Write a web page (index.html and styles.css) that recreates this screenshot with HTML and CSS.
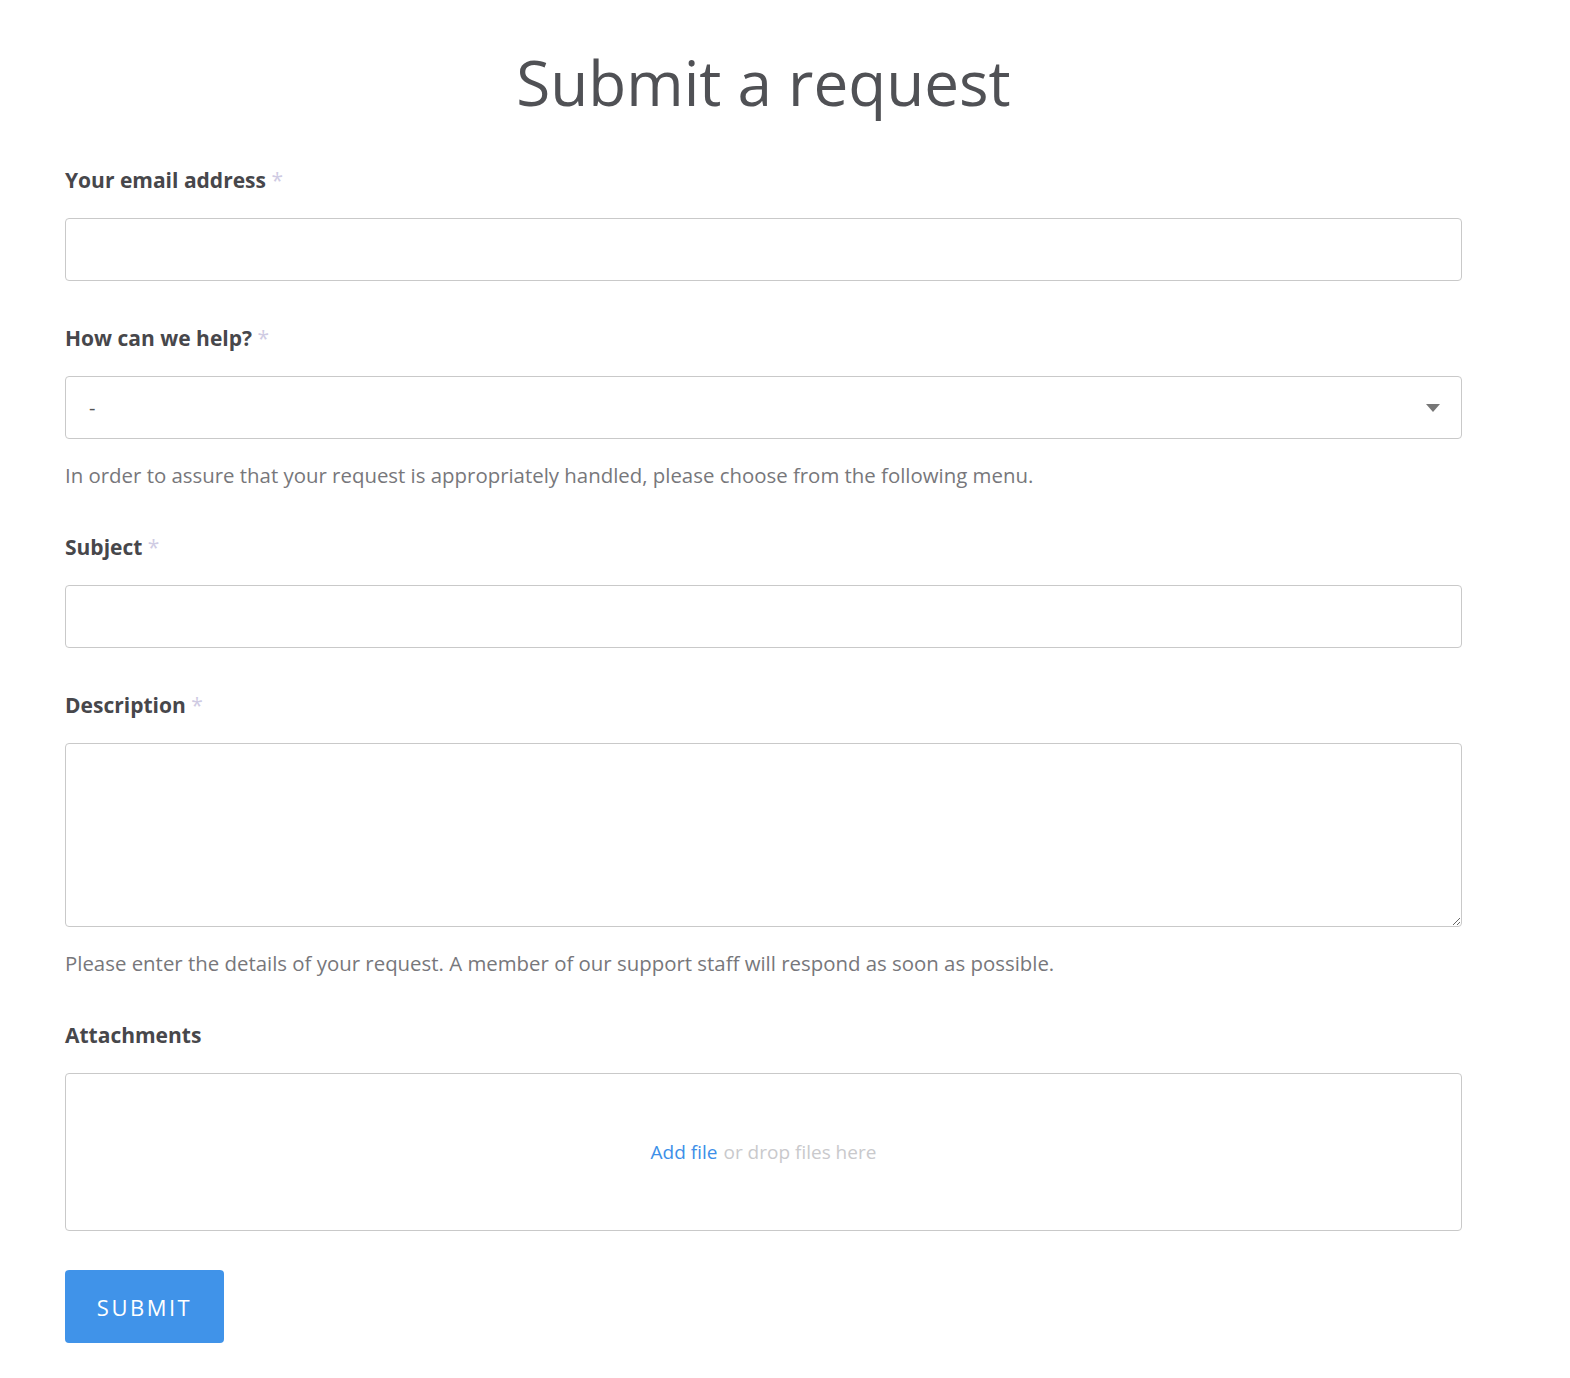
FILE: index.html
```html
<!DOCTYPE html>
<html lang="en">
<head>
    <meta charset="UTF-8">
    <meta name="viewport" content="width=device-width, initial-scale=1.0">
    <title>Submit a request</title>
    <link rel="stylesheet" href="styles.css">
</head>
<body>
    <div class="page">
        <h1 class="title">Submit a request</h1>

        <form class="request-form" onsubmit="return false;">
            <!-- Email -->
            <div class="field">
                <label class="label required" for="email">Your email address</label>
                <input class="input" id="email" type="email">
            </div>

            <!-- Тип запроса -->
            <div class="field">
                <label class="label required">How can we help?</label>
                <div class="select">
                    <span class="select-value">-</span>
                    <svg class="select-arrow" width="14" height="8" viewBox="0 0 14 8">
                        <path d="M0 0 L14 0 L7 8 Z" fill="#777"/>
                    </svg>
                </div>
                <p class="hint">In order to assure that your request is appropriately handled, please choose from the following menu.</p>
            </div>

            <div class="field">
                <label class="label required" for="subject">Subject</label>
                <input class="input" id="subject" type="text">
            </div>

            <div class="field">
                <label class="label required" for="description">Description</label>
                <textarea class="input textarea" id="description"></textarea>
                <p class="hint">Please enter the details of your request. A member of our support staff will respond as soon as possible.</p>
            </div>

            <div class="field">
                <label class="label">Attachments</label>
                <div class="dropzone">
                    <a class="add-file" href="#">Add file</a> <span class="drop-text">or drop files here</span>
                </div>
            </div>

            <button class="submit" type="submit">SUBMIT</button>
        </form>
    </div>
</body>
</html>
```

FILE: styles.css
```css
body {
    margin: 0;
    background: #fff;
    font-family: "Open Sans", "Noto Sans", sans-serif;
    color: #4b4b4f;
}

.page {
    width: 1397px;
    padding: 0 0 40px 65px;
}

.title {
    margin: 42px 0 43px;
    font-size: 62px;
    font-weight: 400;
    line-height: 80px;
    text-align: center;
    color: #505155;
}

.request-form {
    display: flex;
    flex-direction: column;
}

.field {
    display: flex;
    flex-direction: column;
    margin-bottom: 42px;
}

.label {
    font-size: 21px;
    font-weight: 700;
    line-height: 30px;
    margin-bottom: 23px;
    color: #47474b;
}

.required::after {
    content: " *";
    color: #cfcbe3;
    font-weight: 400;
}

.input {
    box-sizing: border-box;
    height: 63px;
    border: 1px solid #c9c9c9;
    border-radius: 4px;
    padding: 0 20px;
    font-family: inherit;
    font-size: 20px;
    outline: none;
}

.textarea {
    height: 184px;
    resize: vertical;
}

.select {
    box-sizing: border-box;
    height: 63px;
    border: 1px solid #c9c9c9;
    border-radius: 4px;
    padding: 0 21px 0 23px;
    display: flex;
    align-items: center;
    justify-content: space-between;
    font-size: 20px;
    color: #555;
}

.hint {
    margin: 21px 0 0;
    font-size: 20.4px;
    line-height: 30px;
    color: #77777b;
}

.dropzone {
    box-sizing: border-box;
    height: 158px;
    border: 1px solid #c9c9c9;
    border-radius: 4px;
    display: flex;
    align-items: center;
    justify-content: center;
    gap: 6px;
    font-size: 19px;
}

.add-file {
    color: #3d8fe8;
    text-decoration: none;
}

.drop-text {
    color: #c9c9cc;
}

.submit {
    align-self: flex-start;
    margin-top: -3px;
    width: 159px;
    height: 73px;
    border: none;
    border-radius: 4px;
    background: #4093e9;
    color: #fff;
    font-family: inherit;
    font-size: 22px;
    letter-spacing: 2.5px;
    cursor: pointer;
}
```
